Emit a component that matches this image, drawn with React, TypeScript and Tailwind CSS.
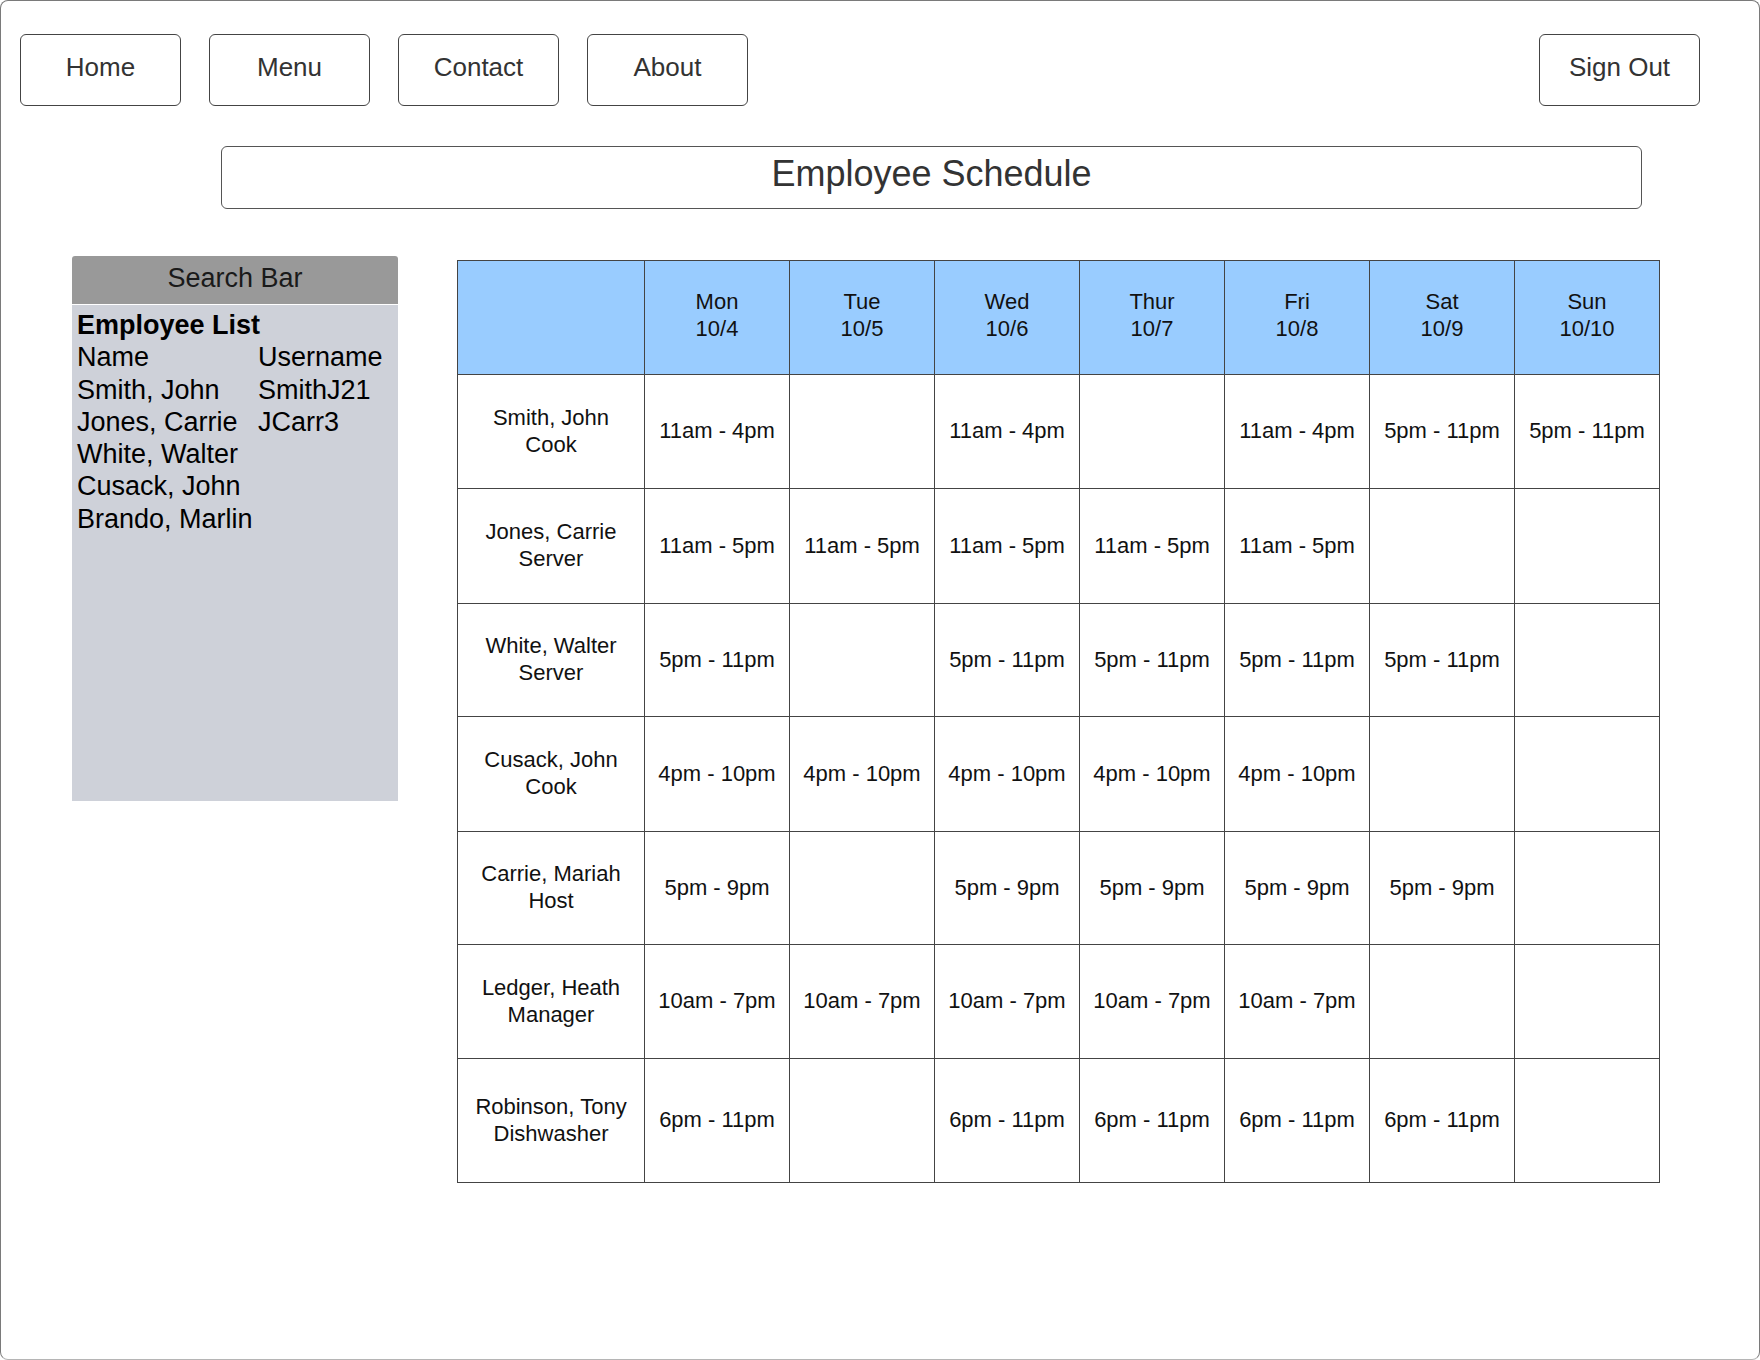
const navItems = ['Home', 'Menu', 'Contact', 'About'];

const employees = [
  { name: 'Smith, John', user: 'SmithJ21' },
  { name: 'Jones, Carrie', user: 'JCarr3' },
  { name: 'White, Walter', user: '' },
  { name: 'Cusack, John', user: '' },
  { name: 'Brando, Marlin', user: '' },
];

const days = [
  ['Mon', '10/4'],
  ['Tue', '10/5'],
  ['Wed', '10/6'],
  ['Thur', '10/7'],
  ['Fri', '10/8'],
  ['Sat', '10/9'],
  ['Sun', '10/10'],
];

const schedule = [
  { name: 'Smith, John', role: 'Cook', h: 'h-[114px]', shifts: ['11am - 4pm', '', '11am - 4pm', '', '11am - 4pm', '5pm - 11pm', '5pm - 11pm'] },
  { name: 'Jones, Carrie', role: 'Server', h: 'h-[115px]', shifts: ['11am - 5pm', '11am - 5pm', '11am - 5pm', '11am - 5pm', '11am - 5pm', '', ''] },
  { name: 'White, Walter', role: 'Server', h: 'h-[113px]', shifts: ['5pm - 11pm', '', '5pm - 11pm', '5pm - 11pm', '5pm - 11pm', '5pm - 11pm', ''] },
  { name: 'Cusack, John', role: 'Cook', h: 'h-[115px]', shifts: ['4pm - 10pm', '4pm - 10pm', '4pm - 10pm', '4pm - 10pm', '4pm - 10pm', '', ''] },
  { name: 'Carrie, Mariah', role: 'Host', h: 'h-[113px]', shifts: ['5pm - 9pm', '', '5pm - 9pm', '5pm - 9pm', '5pm - 9pm', '5pm - 9pm', ''] },
  { name: 'Ledger, Heath', role: 'Manager', h: 'h-[114px]', shifts: ['10am - 7pm', '10am - 7pm', '10am - 7pm', '10am - 7pm', '10am - 7pm', '', ''] },
  { name: 'Robinson, Tony', role: 'Dishwasher', h: 'h-[124px]', shifts: ['6pm - 11pm', '', '6pm - 11pm', '6pm - 11pm', '6pm - 11pm', '6pm - 11pm', ''] },
];

export default function App() {
  return (
    <div
      className="w-[1760px] h-[1360px] bg-white border border-[#7a7a7a] border-b-[#b5b5b5] rounded-lg overflow-hidden"
      style={{ fontFamily: '"Liberation Sans", Arial, sans-serif' }}
    >
      {/* top nav */}
      <div className="flex items-center pt-[33px] pl-[19px] pr-[59px]">
        <div className="flex gap-[28px]">
          {navItems.map((item) => (
            <button
              key={item}
              className="w-[161px] h-[72px] pb-[6px] border border-[#444] rounded-md text-[26px] text-[#333] bg-white"
            >
              {item}
            </button>
          ))}
        </div>
        <button className="ml-auto w-[161px] h-[72px] pb-[6px] border border-[#444] rounded-md text-[26px] text-[#333] bg-white">
          Sign Out
        </button>
      </div>

      <div className="mt-[40px] ml-[220px] w-[1421px] h-[63px] border border-[#555] rounded-md flex justify-center items-center pb-[8px]">
        <h1 className="text-[36px] text-[#333]">Employee Schedule</h1>
      </div>

      <div className="flex items-start mt-[46px] pl-[71px]">
        {/* employee sidebar */}
        <div className="w-[326px] mt-px">
          <div className="h-[48px] pb-[4px] bg-[#999999] rounded-t-[3px] flex items-center justify-center text-[27px] text-[#1a1a1a]">
            Search Bar
          </div>
          <div className="mt-px h-[496px] bg-[#ced1d9] px-[5px] pt-[4px] text-[27px] leading-[32.3px] text-black">
            <div className="font-bold">Employee List</div>
            <div className="grid grid-cols-[181px_1fr]">
              <span>Name</span>
              <span>Username</span>
              {employees.map((e) => (
                <>
                  <span key={e.name}>{e.name}</span>
                  <span key={e.name + 'u'}>{e.user}</span>
                </>
              ))}
            </div>
          </div>
        </div>

        {/* schedule table */}
        <table className="ml-[59px] mt-[5px] table-fixed border-collapse text-[22px] leading-[27px] text-[#111]">
          <colgroup>
            <col className="w-[187px]" />
            {days.map((d) => (
              <col key={d[0]} className="w-[145px]" />
            ))}
          </colgroup>
          <thead>
            <tr className="h-[114px] bg-[#99ccff]">
              <th className="border border-[#444] font-normal"></th>
              {days.map(([day, date]) => (
                <th key={day} className="border border-[#444] font-normal text-center pb-[6px]">
                  <div>{day}</div>
                  <div>{date}</div>
                </th>
              ))}
            </tr>
          </thead>
          <tbody>
            {schedule.map((row) => (
              <tr key={row.name} className={row.h}>
                <td className="border border-[#444] text-center pb-[2px]">
                  <div>{row.name}</div>
                  <div>{row.role}</div>
                </td>
                {row.shifts.map((s, i) => (
                  <td key={i} className="border border-[#444] text-center whitespace-nowrap pb-[2px]">
                    {s}
                  </td>
                ))}
              </tr>
            ))}
          </tbody>
        </table>
      </div>
    </div>
  );
}
